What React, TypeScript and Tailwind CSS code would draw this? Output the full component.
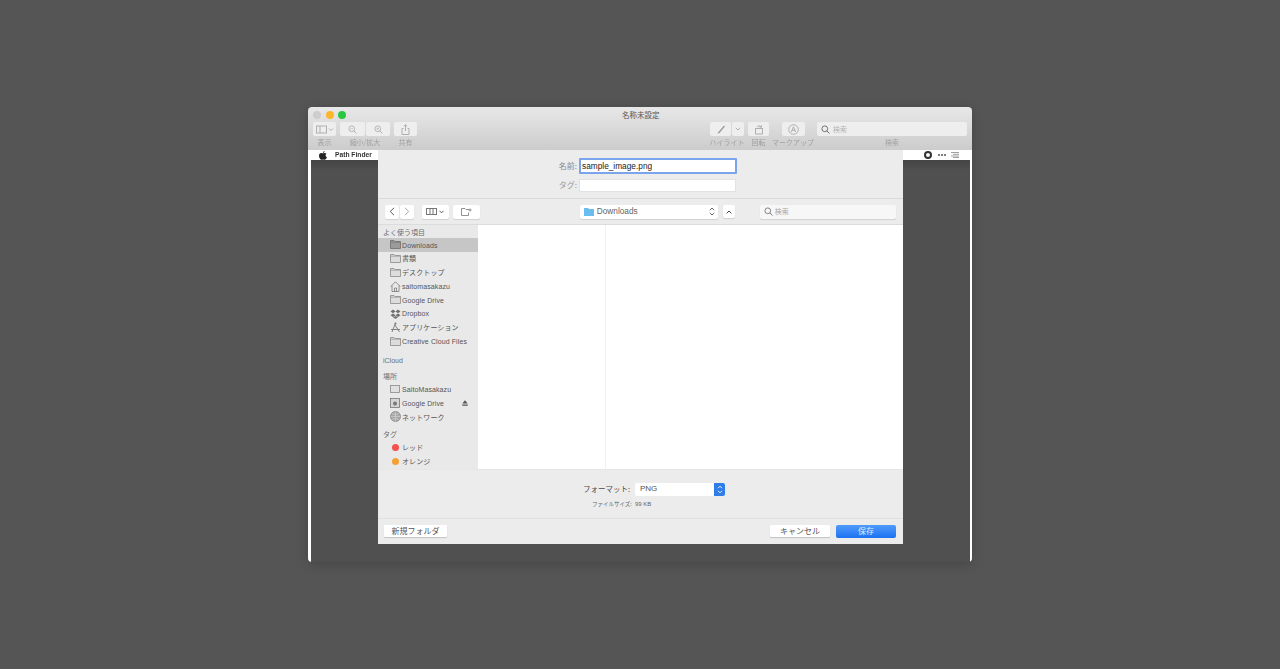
import React from 'react';

const font = { fontFamily: '"Noto Sans CJK JP", "Liberation Sans", sans-serif' };
const latin = { fontFamily: '"Liberation Sans", "Noto Sans CJK JP", sans-serif' };

function Btn({ className = '', children }: { className?: string; children?: React.ReactNode }) {
  return <div className={`flex items-center justify-center bg-[#eeeeee] rounded-[2px] h-[14px] ${className}`}>{children}</div>;
}

const stroke = { fill: 'none', stroke: '#b0b0b0', strokeWidth: 1 };

function Tool({ label, w, children }: { label: string; w: number; children: React.ReactNode }) {
  return (
    <div className="flex flex-col items-center" style={{ width: w }}>
      {children}
      <div className="text-[7px] leading-[10px] mt-[1px] text-[#a0a0a0] whitespace-nowrap">{label}</div>
    </div>
  );
}

function Folder({ dark = false }: { dark?: boolean }) {
  return (
    <svg width="11" height="9" viewBox="0 0 11 9" className="shrink-0">
      <path d="M.5 8.500V.5h3.500l1 1h5.500v7z" fill={dark ? '#9b9b9b' : '#dcdcdc'} stroke={dark ? '#6e6e6e' : '#8a8a8a'} strokeWidth=".8" />
      <path d="M.5 2.200h10" stroke={dark ? '#6e6e6e' : '#8a8a8a'} strokeWidth=".6" />
    </svg>
  );
}

function Item({ icon, label, active = false, right }: { icon: React.ReactNode; label: string; active?: boolean; right?: React.ReactNode }) {
  return (
    <div className={`h-[13.75px] flex items-center pl-[11px] pr-[10px] ${active ? 'bg-[#c6c6c6]' : ''}`}>
      <div className="w-[12px] flex justify-center shrink-0">{icon}</div>
      <span className="ml-[1px] pt-[2px] text-[7px] tracking-[0.1px] text-[#555] whitespace-nowrap flex-1" style={latin}>{label}</span>
      {right}
    </div>
  );
}

function Head({ label, className = '' }: { label: string; className?: string }) {
  return <div className={`h-[13px] pt-[3px] pl-[5px] flex items-center text-[7px] text-[#6e6e6e] ${className}`} style={latin}>{label}</div>;
}

function Mag({ size = 9, color = '#777', mark }: { size?: number; color?: string; mark?: string }) {
  return (
    <svg width={size} height={size} viewBox="0 0 10 10" className="shrink-0">
      <circle cx="4.200" cy="4.200" r="3.200" fill="none" stroke={color} strokeWidth="1" />
      <path d="M6.600 6.600 9.400 9.400" stroke={color} strokeWidth="1.100" />
      {mark && <path d={mark} stroke={color} strokeWidth=".7" fill="none" />}
    </svg>
  );
}

export default function App() {
  return (
    <div className="w-[1280px] h-[669px] bg-[#555555] overflow-hidden pt-[107px] pl-[308px]" style={font}>
      <div className="relative w-[664px] h-[455px] rounded-[4px] overflow-hidden flex flex-col bg-[#505050] shadow-[0_2px_12px_rgba(0,0,0,0.2)] [filter:blur(0.35px)]">
        {/* title bar */}
        <div className="h-[43px] shrink-0 bg-gradient-to-b from-[#e8e8e8] to-[#cccccc]">
          <div className="h-[15px] flex items-center pl-[5px] gap-[4.5px]">
            <div className="w-[8px] h-[8px] rounded-full bg-[#cdcdcd]" />
            <div className="w-[8px] h-[8px] rounded-full bg-[#fdb62c]" />
            <div className="w-[8px] h-[8px] rounded-full bg-[#2ac840]" />
            <div className="flex-1 text-center text-[7.5px] text-[#555] pr-[41px] leading-[13px] pb-[1px]">名称未設定</div>
          </div>
          <div className="flex pl-[5px] items-start">
            <Tool label="表示" w={23}>
              <Btn className="w-[23px]">
                <svg width="18" height="9" viewBox="0 0 18 9"><rect x=".5" y="1" width="10" height="7" {...stroke} /><path d="M4 1v7" {...stroke} /><path d="m13 3.500 2 2 2-2" {...stroke} /></svg>
              </Btn>
            </Tool>
            <div className="w-[4px]" />
            <Tool label="縮小/拡大" w={50}>
              <div className="flex gap-[1px]">
                <Btn className="w-[25px]"><Mag color="#b0b0b0" mark="M2.700 4.200h3" /></Btn>
                <Btn className="w-[24px]"><Mag color="#b0b0b0" mark="M2.700 4.200h3M4.200 2.700v3" /></Btn>
              </div>
            </Tool>
            <div className="w-[4px]" />
            <Tool label="共有" w={23}>
              <Btn className="w-[23px]">
                <svg width="9" height="11" viewBox="0 0 9 11"><path d="M2.500 4.500H1v6h7v-6H6.500M4.500 7V.8M2.800 2.300l1.700-1.600 1.700 1.600" {...stroke} /></svg>
              </Btn>
            </Tool>
            <div className="w-[293px]" />
            <Tool label="ハイライト" w={34}>
              <div className="flex gap-[1px]">
                <Btn className="w-[21px]">
                  <svg width="10" height="10" viewBox="0 0 10 10"><path d="M1.500 9 8 1.500l1 1L3 9.500z" fill="#9c9c9c" /></svg>
                </Btn>
                <Btn className="w-[12px]">
                  <svg width="6" height="4" viewBox="0 0 6 4"><path d="m.8.800 2.200 2.200L5.200.800" {...stroke} /></svg>
                </Btn>
              </div>
            </Tool>
            <div className="w-[4px]" />
            <Tool label="回転" w={21}>
              <Btn className="w-[21px]">
                <svg width="10" height="11" viewBox="0 0 10 11"><rect x="1.500" y="4.500" width="7" height="5.500" {...stroke} /><path d="M3 3c1-1.500 3-1.500 4 0M7.500 1.200V3.200H5.500" {...stroke} /></svg>
              </Btn>
            </Tool>
            <div className="w-[6px]" />
            <Tool label="マークアップ" w={36}>
              <Btn className="w-[23px]">
                <svg width="11" height="11" viewBox="0 0 11 11"><circle cx="5.500" cy="5.500" r="4.800" {...stroke} /><path d="m3.300 8 2.200-5.200L7.700 8M4 6.300h3" {...stroke} /></svg>
              </Btn>
            </Tool>
            <div className="w-[6px]" />
            <Tool label="検索" w={150}>
              <div className="w-[150px] h-[14px] bg-[#eeeeee] rounded-[2px] flex items-center pl-[4px] gap-[3px] text-[7px] text-[#b0b0b0]">
                <Mag color="#666" /> 検索
              </div>
            </Tool>
          </div>
        </div>

        {/* page behind the sheet */}
        <div className="h-[10px] shrink-0 bg-white flex items-center pl-[11px] pr-[13px]">
          <svg width="8" height="9" viewBox="0 0 8 9"><path d="M5.600 0c.1.900-.7 1.900-1.600 1.900C3.900 1 4.700.1 5.600 0zM4 2.300c.5 0 1-.4 1.800-.4.600 0 1.300.3 1.700.9-1.400.9-1.200 2.800.4 3.400C7.400 7.500 6.600 8.800 5.700 8.800c-.6 0-.9-.4-1.600-.4s-1 .4-1.600.4C1.400 8.800 0 6.500 0 4.700 0 3 1.100 2 2.200 2c.7 0 1.300.3 1.800.3z" fill="#222" /></svg>
          <span className="ml-[8px] text-[6.7px] font-bold text-[#333] flex-1" style={latin}>Path Finder</span>
          <div className="w-[8px] h-[8px] rounded-full border-[2px] border-[#333]" />
          <div className="ml-[6px] flex gap-[1px]">
            <div className="w-[2px] h-[2px] rounded-full bg-[#555]" />
            <div className="w-[2px] h-[2px] rounded-full bg-[#555]" />
            <div className="w-[2px] h-[2px] rounded-full bg-[#555]" />
          </div>
          <svg width="8" height="6" viewBox="0 0 8 6" className="ml-[5px]"><path d="M0 .5h8M2 2.300h6M0 4h8M2 5.500h6" stroke="#888" strokeWidth=".8" /></svg>
        </div>

        {/* dark document, framed by the page's white edges */}
        <div className="flex-1 border-l-[3px] border-r-[2px] border-white bg-[#505050]">
          <div className="h-[10px] bg-gradient-to-b from-[#444444] to-[#505050]" />
        </div>

        {/* save sheet */}
        <div className="absolute left-[70px] top-[43px] w-[525px] h-[394px] bg-[#ececec] flex flex-col text-[#4a4a4a]">
          <div className="h-[49px] shrink-0 border-b border-[#d9d9d9] flex flex-col items-start pl-[201px] pt-[9px]">
            <div className="flex items-center h-[14px]">
              <span className="w-[22px] -ml-[22px] text-[8px] text-right pr-[2px] text-[#888] whitespace-nowrap">名前:</span>
              <div className="w-[158px] h-[16px] -my-[1px] bg-white rounded-[1px] border-[2px] border-[#7aa5ec] flex items-center pl-[1px] text-[8.3px] text-[#222]" style={latin}>sample_image.png</div>
            </div>
            <div className="flex items-center h-[14px] mt-[5px]">
              <span className="w-[22px] -ml-[22px] text-[8px] text-right pr-[2px] text-[#999] whitespace-nowrap">タグ:</span>
              <div className="w-[157px] h-[13px] bg-white border border-[#e2e2e2]" />
            </div>
          </div>

          <div className="h-[26px] shrink-0 border-b border-[#dcdcdc] flex items-center pl-[7px] pr-[7px]">
            <div className="flex gap-[1px]">
              <div className="w-[14px] h-[14px] bg-white rounded-[2px] shadow-[0_1px_1px_rgba(0,0,0,0.12)] flex items-center justify-center">
                <svg width="6" height="9" viewBox="0 0 6 9"><path d="M5 .8 1.300 4.500 5 8.200" fill="none" stroke="#555" /></svg>
              </div>
              <div className="w-[14px] h-[14px] bg-white rounded-[2px] shadow-[0_1px_1px_rgba(0,0,0,0.12)] flex items-center justify-center">
                <svg width="6" height="9" viewBox="0 0 6 9"><path d="M1 .8 4.700 4.500 1 8.200" fill="none" stroke="#a5a5a5" /></svg>
              </div>
            </div>
            <div className="ml-[8px] w-[27px] h-[14px] bg-white rounded-[2px] shadow-[0_1px_1px_rgba(0,0,0,0.12)] flex items-center justify-center gap-[2px]">
              <svg width="11" height="7" viewBox="0 0 11 7"><rect x=".5" y=".5" width="10" height="6" fill="none" stroke="#777" /><path d="M4 .5v6M7 .5v6" stroke="#777" /></svg>
              <svg width="5" height="4" viewBox="0 0 5 4"><path d="m.5.800 2 2 2-2" fill="none" stroke="#555" /></svg>
            </div>
            <div className="ml-[4px] w-[27px] h-[14px] bg-white rounded-[2px] shadow-[0_1px_1px_rgba(0,0,0,0.12)] flex items-center justify-center">
              <svg width="11" height="8" viewBox="0 0 11 8"><path d="M.5 7.500V.5H4l1 1h3M.5 7.500h7V4.500M9 .5v3M7.500 2h3" fill="none" stroke="#777" strokeWidth=".8" /></svg>
            </div>
            <div className="ml-[100px] w-[139px] h-[14px] bg-white rounded-[2px] shadow-[0_1px_1px_rgba(0,0,0,0.12)] flex items-center pl-[4px] pr-[3px] gap-[3px]">
              <svg width="10" height="8" viewBox="0 0 10 8"><path d="M0 0h4l1 1h5v7H0z" fill="#6bbcf0" /></svg>
              <span className="flex-1 text-[8.3px] text-[#666]" style={latin}>Downloads</span>
              <svg width="6" height="9" viewBox="0 0 6 9"><path d="M.8 3.200 3 1l2.200 2.200M.8 5.800 3 8l2.200-2.200" fill="none" stroke="#666" /></svg>
            </div>
            <div className="ml-[5px] w-[12px] h-[13px] bg-white rounded-[2px] shadow-[0_1px_1px_rgba(0,0,0,0.12)] flex items-center justify-center">
              <svg width="6" height="4" viewBox="0 0 6 4"><path d="M.6 3.300 3 1l2.400 2.300" fill="none" stroke="#444" /></svg>
            </div>
            <div className="ml-[25px] w-[137px] h-[14px] bg-[#f7f7f7] rounded-[2px] shadow-[0_1px_1px_rgba(0,0,0,0.12)] flex items-center pl-[4px] gap-[2px] text-[7px] text-[#a8a8a8]">
              <Mag color="#777" /> 検索
            </div>
          </div>

          <div className="h-[245px] shrink-0 flex border-b border-[#e6e6e6]">
            <div className="w-[100px] shrink-0 bg-[#e9e9e9] overflow-hidden">
              <Head label="よく使う項目" />
              <Item active icon={<Folder dark />} label="Downloads" />
              <Item icon={<Folder />} label="書類" />
              <Item icon={<Folder />} label="デスクトップ" />
              <Item label="saitomasakazu" icon={<svg width="11" height="11" viewBox="0 0 11 11"><path d="M.8 5.500 5.500.8l4.700 4.700M2 4.500v6h7v-6M4.500 10.500V7h2v3.500" fill="none" stroke="#777" strokeWidth=".8" /></svg>} />
              <Item icon={<Folder />} label="Google Drive" />
              <Item label="Dropbox" icon={<svg width="11" height="10" viewBox="0 0 11 10"><path d="M3 .5 .5 2.500 3 4.300 5.500 2.500zM8 .5 5.500 2.500 8 4.300l2.500-1.800zM3 4.500.5 6.300 3 8l2.500-1.700zM8 4.500 5.500 6.300 8 8l2.500-1.700zM3 8.600l2.500 1.200L8 8.600 5.500 7z" fill="#6f6f6f" /></svg>} />
              <Item label="アプリケーション" icon={<svg width="11" height="11" viewBox="0 0 11 11"><path d="M5.500 1 2 10M5 3l4.500 7M1 7.500h9" fill="none" stroke="#777" strokeWidth=".9" /><circle cx="5.500" cy="1.500" r="1" fill="#777" /></svg>} />
              <Item icon={<Folder />} label="Creative Cloud Files" />
              <Head label="iCloud" className="mt-[5.5px]" />
              <Head label="場所" className="mt-[3px]" />
              <Item label="SaitoMasakazu" icon={<svg width="10" height="8" viewBox="0 0 10 8"><rect x=".5" y=".5" width="9" height="7" fill="#e0e0e0" stroke="#8a8a8a" strokeWidth=".8" /></svg>} />
              <Item label="Google Drive" right={<svg width="6" height="6" viewBox="0 0 6 6"><path d="M3 .3 5.700 3.500H.3zM.3 4.500h5.400v1.200H.3z" fill="#555" /></svg>} icon={<svg width="10" height="10" viewBox="0 0 10 10"><rect x=".5" y=".5" width="9" height="9" fill="#d5d5d5" stroke="#777" strokeWidth=".8" /><circle cx="5" cy="5.500" r="2" fill="#777" /></svg>} />
              <Item label="ネットワーク" icon={<svg width="11" height="11" viewBox="0 0 11 11"><circle cx="5.500" cy="5.500" r="5" fill="#a8a8a8" stroke="#808080" strokeWidth=".7" /><path d="M.8 5.500h9.400M5.500.5v10M2 2.500c2 1.200 5 1.200 7 0M2 8.500c2-1.200 5-1.200 7 0" fill="none" stroke="#d5d5d5" strokeWidth=".6" /></svg>} />
              <Head label="タグ" className="mt-[3.75px]" />
              <Item label="レッド" icon={<div className="w-[7px] h-[7px] rounded-full bg-[#f4514c]" />} />
              <Item label="オレンジ" icon={<div className="w-[7px] h-[7px] rounded-full bg-[#f5a033]" />} />
            </div>
            <div className="flex-1 bg-white flex">
              <div className="w-[128px] border-r border-[#f1f1f1]" />
              <div className="flex-1" />
            </div>
          </div>

          <div className="h-[49px] shrink-0 border-b border-[#e0e0e0] pl-[205px]">
            <div className="flex items-center mt-[12px] h-[14px]">
              <span className="w-[47px] text-[7.5px] text-[#4a4a4a] mr-[5px] whitespace-nowrap">フォーマット:</span>
              <div className="w-[90px] h-[13px] bg-white rounded-[2px] flex items-center pl-[5px] text-[8px] text-[#555] overflow-hidden" style={latin}>
                PNG
                <div className="ml-auto w-[11px] h-[13px] bg-[#2f7de8] flex items-center justify-center">
                  <svg width="6" height="9" viewBox="0 0 6 9"><path d="M1 3.200 3 1.200l2 2M1 5.800l2 2 2-2" fill="none" stroke="#fff" strokeWidth=".9" /></svg>
                </div>
              </div>
            </div>
            <div className="flex items-center mt-[3px] h-[10px] ml-[9px] text-[#666]">
              <span className="w-[38px] mr-[5px] text-[5.5px] whitespace-nowrap">ファイルサイズ:</span>
              <span className="text-[6px]" style={latin}>99 KB</span>
            </div>
          </div>

          <div className="flex-1 flex items-center pl-[6px] pr-[7px] pb-[1px] text-[8px]">
            <div className="w-[63px] h-[12px] bg-white rounded-[1px] shadow-[0_1px_1px_rgba(0,0,0,0.18)] flex items-center justify-center whitespace-nowrap text-[#555]">新規フォルダ</div>
            <div className="ml-auto w-[60px] h-[12px] bg-white rounded-[1px] shadow-[0_1px_1px_rgba(0,0,0,0.18)] flex items-center justify-center whitespace-nowrap text-[#555]">キャンセル</div>
            <div className="ml-[6px] w-[60px] h-[13px] rounded-[2px] bg-gradient-to-b from-[#4f9bfb] to-[#1b71f1] flex items-center justify-center text-[#dcebff]">保存</div>
          </div>
        </div>
      </div>
    </div>
  );
}
